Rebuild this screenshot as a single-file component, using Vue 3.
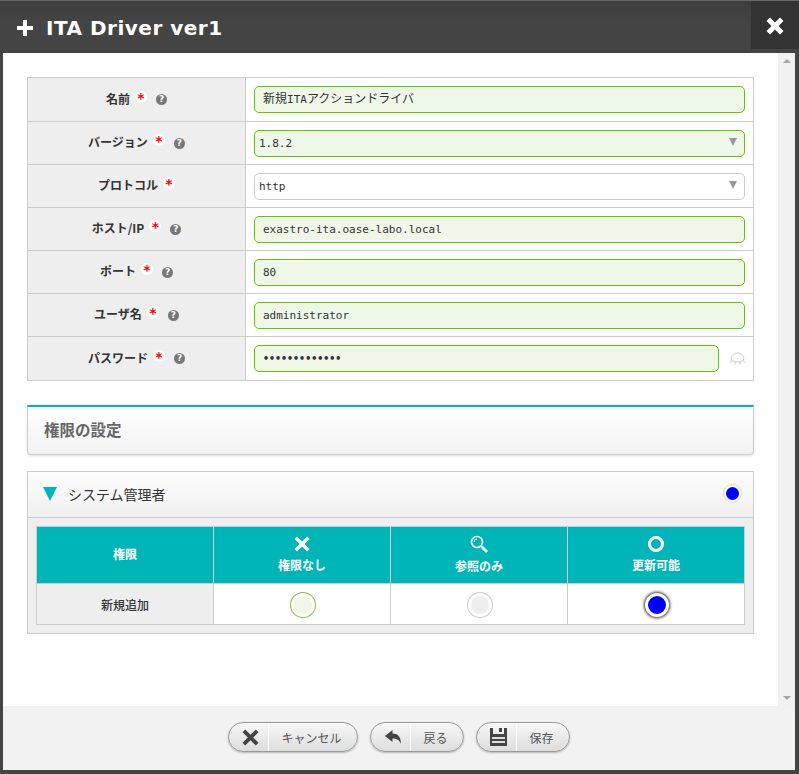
<script setup>
const fields = [
  { label: '名前', help: true, value: '新規ITAアクションドライバ', type: 'text', h: 44 },
  { label: 'バージョン', help: true, value: '1.8.2', type: 'select', h: 43 },
  { label: 'プロトコル', help: false, value: 'http', type: 'select', plain: true, h: 43 },
  { label: 'ホスト/IP', help: true, value: 'exastro-ita.oase-labo.local', type: 'text', h: 43 },
  { label: 'ポート', help: true, value: '80', type: 'text', h: 43 },
  { label: 'ユーザ名', help: true, value: 'administrator', type: 'text', h: 43 },
  { label: 'パスワード', help: true, value: '•••••••••••••', type: 'password', h: 44 }
]

// the japanese runs are wider than the mono latin ones
function runs(text) {
  return text.split(/([^\x00-\x7f•]+)/).filter(Boolean).map(t => ({ t, ja: /[^\x00-\x7f•]/.test(t) }))
}
</script>

<template>
  <div class="dialog">
    <header class="head">
      <svg class="plus" width="16" height="16" viewBox="0 0 16 16"><path d="M6 0h4v6h6v4h-6v6H6v-6H0V6h6z" fill="#fff" /></svg>
      <h1>ITA Driver ver1</h1>
      <button class="close">
        <svg width="18" height="18" viewBox="0 0 18 18"><path d="M4 .5l5 5 5-5L17.500 4l-5 5 5 5-3.500 3.500-5-5-5 5L.5 14l5-5-5-5z" fill="#fff" /></svg>
      </button>
    </header>

    <div class="middle">
      <main class="body">
        <table class="form">
          <tr v-for="f in fields" :key="f.label" :style="{ height: f.h + 'px' }">
            <th>
              <div class="lab">
                <span>{{ f.label }}</span><i class="req">*</i><i v-if="f.help" class="help">?</i>
              </div>
            </th>
            <td>
              <div class="cell">
                <div class="input" :class="{ plain: f.plain, sel: f.type === 'select', pw: f.type === 'password' }">
                  <span v-for="r in runs(f.value)" :key="r.t" :class="{ ja: r.ja }">{{ r.t }}</span>
                  <b v-if="f.type === 'select'" class="caret"></b>
                </div>
                <svg v-if="f.type === 'password'" class="eye" width="15" height="13" viewBox="0.5 0 15 13" fill="none" stroke="#c8c8c8">
                  <path d="M1.500 7C2 3 5 1 8 1s6 2 6.500 6c-1.500 2-4 3-6.500 3S3 9 1.500 7z" />
                  <path d="M2 8.500l-1 2M5.500 10v2.500M10.500 10v2.500M14 8.500l1 2" stroke="#b4c8d4" />
                </svg>
              </div>
            </td>
          </tr>
        </table>

        <div class="section">権限の設定</div>

        <div class="panel">
          <div class="panel-head">
            <b class="tri"></b>
            <span>システム管理者</span>
            <i class="dot"></i>
          </div>
          <div class="panel-body">
            <table class="perm">
              <tr class="perm-head">
                <th>権限</th>
                <th>
                  <svg width="16" height="16" viewBox="0 0 16 16"><path d="M3 .5L8 5.500 13 .5 15.500 3 10.500 8l5 5-2.500 2.500-5-5-5 5L.5 13l5-5-5-5z" fill="#fff" /></svg>
                  <div>権限なし</div>
                </th>
                <th>
                  <svg width="18" height="18" viewBox="0 0 18 18" fill="none" stroke="#fff"><circle cx="7" cy="7" r="5.500" stroke-width="1.600" /><path d="M4 7a3 3 0 0 1 3-3" stroke-width="1" /><path d="M11 11l1 1" stroke-width="1.200" /><path d="M12 12l5 5" stroke-width="2.800" /></svg>
                  <div>参照のみ</div>
                </th>
                <th>
                  <svg width="16" height="16" viewBox="0 0 16 16" fill="none" stroke="#fff"><circle cx="8" cy="8" r="6.500" stroke-width="3" /></svg>
                  <div>更新可能</div>
                </th>
              </tr>
              <tr class="perm-row">
                <th>新規追加</th>
                <td><i class="radio green"></i></td>
                <td><i class="radio gray"></i></td>
                <td><i class="radio blue"></i></td>
              </tr>
            </table>
          </div>
        </div>
      </main>
      <div class="scrollbar">
        <b class="up"></b>
        <b class="down"></b>
      </div>
    </div>

    <footer class="foot">
      <button class="btn cancel">
        <span class="ic"><svg width="17" height="17" viewBox="0 0 16 16"><path d="M3 .5L8 5.500 13 .5 15.500 3 10.500 8l5 5-2.500 2.500-5-5-5 5L.5 13l5-5-5-5z" fill="#444" /></svg></span>
        <span class="tx">キャンセル</span>
      </button>
      <button class="btn back">
        <span class="ic"><svg width="18" height="16" viewBox="0 0 17 16"><path d="M8 1v3.500c5 0 8.500 3 8.500 10.500-1.500-4-4-5.500-8.500-5.500V13L.5 7z" fill="#444" /></svg></span>
        <span class="tx">戻る</span>
      </button>
      <button class="btn save">
        <span class="ic"><svg width="17" height="18" viewBox="0 0 17 18"><path d="M0 0h3v6h11V0h3v18H0z" fill="#444" /><path d="M9 0h3v4H9z" fill="#444" /><path d="M2 9h13v2H2zM2 13h13v2H2z" fill="#ddd" /></svg></span>
        <span class="tx">保存</span>
      </button>
    </footer>
  </div>
</template>

<style>
html, body { margin: 0; background: #444; }
</style>

<style scoped>
.dialog {
  width: 799px;
  height: 774px;
  box-sizing: border-box;
  background: #444;
  border-top: 1px solid #666;
  display: flex;
  flex-direction: column;
  overflow: hidden;
  font-family: "Noto Sans CJK JP", sans-serif;
  font-size: 12px;
  color: #333;
}
.head {
  height: 52px;
  flex: none;
  display: flex;
  align-items: flex-start;
  padding-left: 17px;
  background: linear-gradient(#3e3e3e, #444 40%);
  position: relative;
}
.plus { margin-top: 19px; }
.head h1 {
  margin: 14px 0 0 13px;
  font: bold 20px/26px "DejaVu Sans", sans-serif;
  color: #fff;
  letter-spacing: 0.5px;
}
.close {
  position: absolute;
  right: 0;
  top: 0;
  width: 48px;
  height: 48px;
  border: 0;
  padding: 2px 0 0;
  background: #333;
  display: flex;
  align-items: center;
  justify-content: center;
}
.middle {
  flex: 1;
  min-height: 0;
  display: flex;
  margin: 0 4px 0 3px;
}
.body {
  flex: 1;
  min-width: 0;
  background: #fff;
  padding: 24px;
}
.scrollbar {
  width: 17px;
  flex: none;
  background: #f1f1f1;
  display: flex;
  flex-direction: column;
  justify-content: space-between;
  align-items: center;
  padding: 6px 0;
  box-sizing: border-box;
}
.up, .down {
  width: 0;
  height: 0;
  border-left: 4px solid transparent;
  border-right: 4px solid transparent;
}
.up { border-bottom: 4px solid #a3a3a3; }
.down { border-top: 4px solid #a3a3a3; }

table { border-collapse: collapse; table-layout: fixed; width: 100%; }
.form { border: 1px solid #ccc; }
.form th {
  width: 217px;
  padding: 0;
  background: #eee;
  border: 1px solid #ccc;
  font-size: 12px;
  font-weight: 700;
  color: #333;
  white-space: nowrap;
}
.form td { padding: 0 8px; border: 1px solid #ccc; background: #fff; }
.lab {
  display: flex;
  justify-content: center;
  align-items: center;
  height: 18px;
  margin-top: -3px;
}
.req {
  width: 12px;
  height: 12px;
  margin: -3px 0 0 5px;
  border-radius: 50%;
  background: #fff;
  color: #f00;
  font: bold 14px/15px "DejaVu Sans", sans-serif;
  text-align: center;
}
.help {
  width: 11px;
  height: 11px;
  margin: 3px 0 0 9px;
  border-radius: 50%;
  background: #777;
  color: #fff;
  font: bold 9px/11px "DejaVu Sans", sans-serif;
  text-align: center;
}
.cell { display: flex; align-items: center; gap: 11px; }
.input {
  flex: 1;
  height: 27px;
  box-sizing: border-box;
  border: 1px solid #60c800;
  border-radius: 5px;
  background: #eef7e8;
  padding-left: 8px;
  font: 11px/25px "DejaVu Sans Mono", "Noto Sans CJK JP", monospace;
  color: #333;
  position: relative;
}
.ja { font: 12px "Noto Sans CJK JP", sans-serif; }
.input.sel { padding-left: 4px; }
.input.plain { border-color: #ccc; background: #fff; }
.input.pw { font-size: 10px; font-weight: 700; }
.caret {
  position: absolute;
  right: 7px;
  top: 7px;
  width: 0;
  height: 0;
  border-left: 4px solid transparent;
  border-right: 4px solid transparent;
  border-top: 8px solid #999;
}
.eye { flex: none; }

.section {
  margin-top: 24px;
  height: 50px;
  box-sizing: border-box;
  border: 1px solid #ccc;
  border-top: 2px solid #00b5b8;
  border-radius: 0 0 4px 4px;
  background: linear-gradient(#fff, #f2f2f2);
  box-shadow: 0 1px 3px rgba(0, 0, 0, 0.12);
  padding-left: 16px;
  font-size: 15.500px;
  font-weight: 700;
  line-height: 45px;
  color: #666;
}
.panel {
  margin-top: 16px;
  height: 163px;
  box-sizing: border-box;
  border: 1px solid #ccc;
  background: #eee;
}
.panel-head {
  height: 45px;
  box-sizing: content-box;
  border-bottom: 1px solid #ccc;
  background: linear-gradient(#fdfdfd, #f0f0f0);
  display: flex;
  align-items: center;
  padding: 0 12px 0 15px;
  font-size: 14px;
  color: #333;
}
.panel-head > * { position: relative; top: -1px; }
.tri {
  width: 0;
  height: 0;
  border-left: 7px solid transparent;
  border-right: 7px solid transparent;
  border-top: 14px solid #00b5b8;
  margin-right: 11px;
}
.dot {
  margin-left: auto;
  width: 13px;
  height: 13px;
  border: 2px solid #fff;
  outline: 1px solid #ddd;
  border-radius: 50%;
  background: #00f;
}
.panel-body { padding: 8px 8px 0; }
.perm { border: 1px solid #ccc; }
.perm th, .perm td { border: 1px solid #ccc; padding: 0; text-align: center; }
.perm-head { height: 57px; }
.perm-head th {
  background: #00b5b8;
  color: #fff;
  font-size: 12px;
  font-weight: 700;
  line-height: 18px;
}
.perm-head th:first-child { padding-bottom: 2px; }
.perm-head svg { display: block; margin: 0 auto 4px; }
.perm-row { height: 41px; }
.perm-row th { background: #eee; font-size: 12px; font-weight: 500; color: #333; }
.perm-row td { background: #fff; }
.radio {
  display: block;
  margin: 0 auto;
  width: 24px;
  height: 24px;
  box-sizing: border-box;
  border-radius: 50%;
  border: 3px solid #fff;
  transform: translate(1px, 1px);
}
.green { background: #eef7e8; box-shadow: 0 0 0 1px #7acb38; }
.gray { background: #eee; box-shadow: 0 0 0 1px #ccc; }
.blue { background: #00f; box-shadow: 0 0 3px 1px #333; }

.foot {
  height: 64px;
  flex: none;
  margin: 0 4px 4px 3px;
  background: #f2f2f2;
  display: flex;
  justify-content: center;
  align-items: flex-start;
  gap: 12px;
  padding: 16px 0 0;
  box-sizing: border-box;
}
.btn {
  height: 30px;
  padding: 0;
  display: flex;
  align-items: stretch;
  border: 1px solid #999;
  border-radius: 15px;
  background: linear-gradient(#f7f7f7, #ddd);
  box-shadow: 0 1px 2px rgba(0, 0, 0, 0.25);
  font: 12px "Noto Sans CJK JP", sans-serif;
  color: #555;
}
.cancel { width: 130px; }
.back { width: 94px; }
.save { width: 94px; }
.ic {
  width: 40px;
  flex: none;
  display: flex;
  align-items: center;
  justify-content: center;
  border-right: 1px solid #fff;
  padding-left: 4px;
  box-sizing: border-box;
}
.tx { flex: 1; align-self: center; padding-right: 3px; }
</style>
